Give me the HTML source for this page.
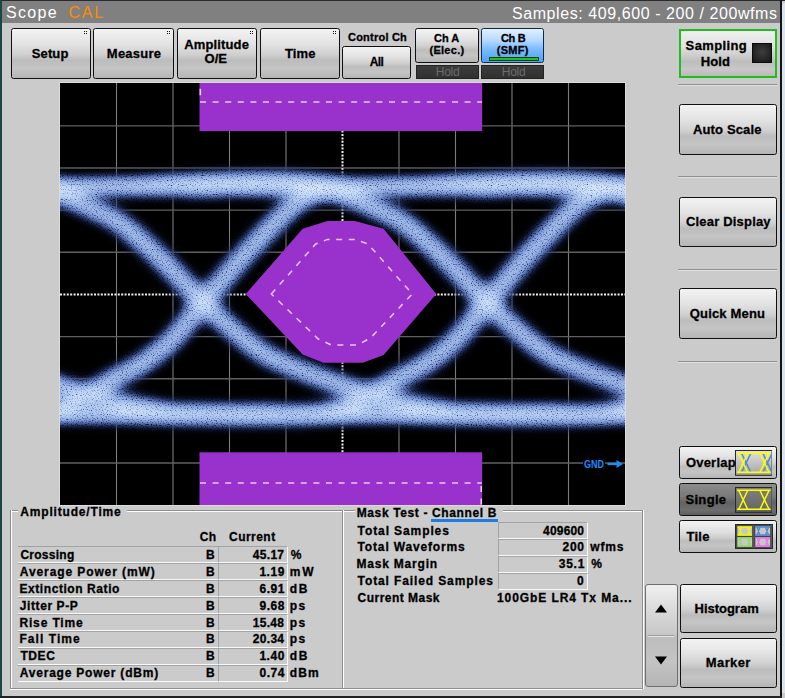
<!DOCTYPE html><html><head><meta charset="utf-8"><style>
*{margin:0;padding:0;box-sizing:border-box}
html,body{width:785px;height:698px;overflow:hidden;background:#cbcbcb;font-family:"Liberation Sans",sans-serif;color:#000}
.a{position:absolute}
.t{position:absolute;white-space:nowrap;line-height:1}
.b{font-weight:bold;-webkit-text-stroke:0.3px currentColor}
.btn{position:absolute;border:1.5px solid #101010;border-radius:2.5px;background:linear-gradient(#f3f3f3 0%,#e3e3e3 30%,#d0d0d0 52%,#bcbcbc 64%,#c5c5c5 80%,#b5b5b5 100%)}
.cell{position:absolute;border-top:1px solid #a3a3a3;border-left:1px solid #a3a3a3;border-bottom:1px solid #fafafa;border-right:1px solid #fafafa}
</style></head><body><div class="a" style="left:0px;top:0px;width:785.00px;height:1.00px;background:#2a2a2a"></div>
<div class="a" style="left:0px;top:0px;width:1.50px;height:698.00px;background:#1b4646"></div>
<div class="a" style="left:1.5px;top:1px;width:778.50px;height:21.50px;background:#808080"></div>
<div class="a" style="left:780px;top:0px;width:2.40px;height:698.00px;background:#141414"></div>
<div class="a" style="left:782.4px;top:2.5px;width:2.60px;height:690.50px;background:#dae4ee;border-radius:3px 0 0 0"></div>
<div class="a" style="left:0px;top:695.6px;width:782.40px;height:2.40px;background:#222"></div>
<div class="btn" style="left:11px;top:28.2px;width:79.50px;height:50.40px;"></div>
<svg class="a" style="left:84px;top:31px" width="4" height="4"><path d="M0,0h1v1h-1zM2,0h1v1h-1zM0,2h1v1h-1zM2,2h1v1h-1z" fill="#111"/></svg>
<div class="btn" style="left:93px;top:28.2px;width:80.80px;height:50.40px;"></div>
<svg class="a" style="left:167px;top:31px" width="4" height="4"><path d="M0,0h1v1h-1zM2,0h1v1h-1zM0,2h1v1h-1zM2,2h1v1h-1z" fill="#111"/></svg>
<div class="btn" style="left:176.5px;top:28.2px;width:80.30px;height:50.40px;"></div>
<svg class="a" style="left:250px;top:31px" width="4" height="4"><path d="M0,0h1v1h-1zM2,0h1v1h-1zM0,2h1v1h-1zM2,2h1v1h-1z" fill="#111"/></svg>
<div class="btn" style="left:259.8px;top:28.2px;width:79.80px;height:50.40px;"></div>
<svg class="a" style="left:333px;top:31px" width="4" height="4"><path d="M0,0h1v1h-1zM2,0h1v1h-1zM0,2h1v1h-1zM2,2h1v1h-1z" fill="#111"/></svg>
<div class="btn" style="left:342.1px;top:46.2px;width:69.20px;height:32.50px;"></div>
<div class="btn" style="left:415.4px;top:28.2px;width:63.30px;height:35.10px;"></div>
<div class="btn" style="left:481.3px;top:28.2px;width:62.80px;height:35.10px;background:linear-gradient(#e2f0ff 0%,#b4d8ff 35%,#7dbcff 60%,#4aa2f8 100%);border-color:#0c2a50"></div>
<div class="a" style="left:488.5px;top:57px;width:50.30px;height:3.50px;background:#20c020;border:1px solid #0b3d0b"></div>
<div class="a" style="left:415.5px;top:65.1px;width:63.20px;height:13.50px;background:linear-gradient(#3c3c3c,#303030);border:1px solid #232323"></div>
<div class="a" style="left:481.3px;top:65.1px;width:63.20px;height:13.50px;background:linear-gradient(#3c3c3c,#303030);border:1px solid #232323"></div>
<div class="a" style="left:679.3px;top:28.5px;width:97.50px;height:49.70px;border:2px solid #1fbd1f;background:linear-gradient(#f0f0f0 0%,#e0e0e0 35%,#cdcdcd 55%,#bdbdbd 68%,#c8c8c8 85%,#bababa 100%)"></div>
<div class="a" style="left:752px;top:42.7px;width:20.00px;height:20.20px;background:radial-gradient(circle at 50% 45%,#3e3e3e,#222 70%,#141414);border:1px solid #0a0a0a"></div>
<div class="a" style="left:678px;top:83.6px;width:99.00px;height:1.00px;background:#8e8e8e;box-shadow:0 1px 0 #e2e2e2"></div>
<div class="a" style="left:678px;top:176.4px;width:99.00px;height:1.00px;background:#8e8e8e;box-shadow:0 1px 0 #e2e2e2"></div>
<div class="a" style="left:678px;top:268.7px;width:99.00px;height:1.00px;background:#8e8e8e;box-shadow:0 1px 0 #e2e2e2"></div>
<div class="a" style="left:678px;top:360.5px;width:99.00px;height:1.00px;background:#8e8e8e;box-shadow:0 1px 0 #e2e2e2"></div>
<div class="btn" style="left:679.3px;top:103.8px;width:97.30px;height:50.90px;"></div>
<div class="btn" style="left:679.3px;top:196.8px;width:97.30px;height:49.80px;"></div>
<div class="btn" style="left:679.3px;top:288.2px;width:97.30px;height:50.40px;"></div>
<div class="btn" style="left:679.3px;top:445.8px;width:97.30px;height:33.60px;"></div>
<div class="btn" style="left:679.3px;top:482.6px;width:97.30px;height:33.70px;background:linear-gradient(#8c8c8c 0%,#7a7a7a 40%,#636363 60%,#6e6e6e 85%,#5c5c5c 100%)"></div>
<div class="btn" style="left:679.3px;top:519.6px;width:97.30px;height:33.80px;"></div>
<div class="btn" style="left:679.5px;top:583.5px;width:97.10px;height:49.10px;"></div>
<div class="btn" style="left:679.5px;top:638px;width:97.10px;height:49.70px;"></div>
<div class="a" style="left:644.5px;top:584.1px;width:33.00px;height:103.40px;border:1px solid #6e6e6e;border-radius:3px;background:linear-gradient(#f0f0f0 0%,#dadada 25%,#c8c8c8 48%,#bdbdbd 52%,#c4c4c4 75%,#b4b4b4 100%)"></div>
<div class="a" style="left:648px;top:635px;width:26.00px;height:2.00px;background:#e4e4e4;border-top:1px solid #a0a0a0"></div>
<svg class="a" style="left:654px;top:602px" width="14" height="12"><path d="M1,10.5 L7,2.5 L13,10.5 Z" fill="#000"/></svg>
<svg class="a" style="left:654px;top:655px" width="14" height="12"><path d="M1,1.5 L7,9.5 L13,1.5 Z" fill="#000"/></svg>
<svg class="a" style="left:734.8px;top:449.8px" width="37.6" height="25.8" viewBox="0 0 37.6 25.8"><defs><linearGradient id="g449" x1="0" y1="0" x2="0" y2="1"><stop offset="0" stop-color="#e2e2e2"/><stop offset="1" stop-color="#a4a4a4"/></linearGradient></defs><rect x="0.5" y="0.5" width="36.6" height="24.8" fill="url(#g449)" stroke="#2a2a2a" stroke-width="1"/><path d="M6.699999999999999,3.5 L15.7,22.3 M15.7,3.5 L6.699999999999999,22.3" stroke="#4a88d8" stroke-width="1.5" fill="none"/><path d="M28.0,3.5 L37.0,22.3 M37.0,3.5 L28.0,22.3" stroke="#4a88d8" stroke-width="1.5" fill="none"/><path d="M3.6999999999999993,3.5 L12.7,22.3 M12.7,3.5 L3.6999999999999993,22.3" stroke="#ffff00" stroke-width="1.5" fill="none"/><path d="M25.0,3.5 L34.0,22.3 M34.0,3.5 L25.0,22.3" stroke="#ffff00" stroke-width="1.5" fill="none"/><path d="M2,3.3 H35.6 M2,22.2 H35.6" stroke="#ffff00" stroke-width="1.6"/></svg>
<svg class="a" style="left:734.8px;top:486.9px" width="37.6" height="25.8" viewBox="0 0 37.6 25.8"><defs><linearGradient id="g486" x1="0" y1="0" x2="0" y2="1"><stop offset="0" stop-color="#808080"/><stop offset="1" stop-color="#646464"/></linearGradient></defs><rect x="0.5" y="0.5" width="36.6" height="24.8" fill="url(#g486)" stroke="#2a2a2a" stroke-width="1"/><path d="M3.6999999999999993,3.5 L12.7,22.3 M12.7,3.5 L3.6999999999999993,22.3" stroke="#ffff00" stroke-width="1.5" fill="none"/><path d="M25.0,3.5 L34.0,22.3 M34.0,3.5 L25.0,22.3" stroke="#ffff00" stroke-width="1.5" fill="none"/><path d="M2,3.3 H35.6 M2,22.2 H35.6" stroke="#ffff00" stroke-width="1.6"/></svg>
<svg class="a" style="left:735px;top:524.3px" width="38" height="25" viewBox="0 0 38 25"><rect x="0.5" y="0.5" width="37" height="24" fill="#555" stroke="#2a2a2a"/><rect x="2" y="2" width="15.5" height="10" fill="#c8c8c8" stroke="#333" stroke-width="0.6"/><path d="M2.5,3 H17 M2.5,11 H17 M4,3 L7,11 M7,3 L4,11 M12.5,3 L15.5,11 M15.5,3 L12.5,11" stroke="#f5f500" stroke-width="1.3" fill="none"/><rect x="20" y="2" width="15.5" height="10" fill="#c8c8c8" stroke="#333" stroke-width="0.6"/><path d="M20.5,3 H35 M20.5,11 H35 M22,3 L25,11 M25,3 L22,11 M30.5,3 L33.5,11 M33.5,3 L30.5,11" stroke="#4a88d8" stroke-width="1.3" fill="none"/><rect x="2" y="13" width="15.5" height="10" fill="#c8c8c8" stroke="#333" stroke-width="0.6"/><path d="M2.5,14 H17 M2.5,22 H17 M4,14 L7,22 M7,14 L4,22 M12.5,14 L15.5,22 M15.5,14 L12.5,22" stroke="#90e060" stroke-width="1.3" fill="none"/><rect x="20" y="13" width="15.5" height="10" fill="#c8c8c8" stroke="#333" stroke-width="0.6"/><path d="M20.5,14 H35 M20.5,22 H35 M22,14 L25,22 M25,14 L22,22 M30.5,14 L33.5,22 M33.5,14 L30.5,22" stroke="#f070f0" stroke-width="1.3" fill="none"/></svg>
<div class="a" style="left:10.3px;top:510.2px;width:7.70px;height:1.00px;background:#8e8e8e;box-shadow:0 1px 0 #fff"></div>
<div class="a" style="left:126.8px;top:510.2px;width:227.80px;height:1.00px;background:#8e8e8e;box-shadow:0 1px 0 #fff"></div>
<div class="a" style="left:10.3px;top:510.2px;width:1.00px;height:178.30px;background:#8e8e8e;box-shadow:1px 0 0 #fff"></div>
<div class="a" style="left:10.3px;top:688.3px;width:632.20px;height:1.00px;background:#8e8e8e;box-shadow:0 1px 0 #fff"></div>
<div class="a" style="left:502.8px;top:510.2px;width:139.20px;height:1.00px;background:#8e8e8e;box-shadow:0 1px 0 #fff"></div>
<div class="a" style="left:342.2px;top:510.2px;width:1.00px;height:178.30px;background:#8e8e8e;box-shadow:1px 0 0 #fff"></div>
<div class="a" style="left:641.5px;top:510.2px;width:1.00px;height:179.10px;background:#8e8e8e;box-shadow:1px 0 0 #fff"></div>
<div class="a" style="left:431.2px;top:519px;width:66.90px;height:2.50px;background:#1a7ee6"></div>
<div class="a" style="left:18px;top:546.0px;width:200.50px;height:17.00px;border-top:1px solid #a3a3a3;border-bottom:1px solid #fafafa"></div>
<div class="cell" style="left:218.3px;top:546.00px;width:69.5px;height:17px"></div>
<div class="a" style="left:18px;top:562.93px;width:200.50px;height:17.00px;border-top:1px solid #a3a3a3;border-bottom:1px solid #fafafa"></div>
<div class="cell" style="left:218.3px;top:562.93px;width:69.5px;height:17px"></div>
<div class="a" style="left:18px;top:579.86px;width:200.50px;height:17.00px;border-top:1px solid #a3a3a3;border-bottom:1px solid #fafafa"></div>
<div class="cell" style="left:218.3px;top:579.86px;width:69.5px;height:17px"></div>
<div class="a" style="left:18px;top:596.79px;width:200.50px;height:17.00px;border-top:1px solid #a3a3a3;border-bottom:1px solid #fafafa"></div>
<div class="cell" style="left:218.3px;top:596.79px;width:69.5px;height:17px"></div>
<div class="a" style="left:18px;top:613.72px;width:200.50px;height:17.00px;border-top:1px solid #a3a3a3;border-bottom:1px solid #fafafa"></div>
<div class="cell" style="left:218.3px;top:613.72px;width:69.5px;height:17px"></div>
<div class="a" style="left:18px;top:630.65px;width:200.50px;height:17.00px;border-top:1px solid #a3a3a3;border-bottom:1px solid #fafafa"></div>
<div class="cell" style="left:218.3px;top:630.65px;width:69.5px;height:17px"></div>
<div class="a" style="left:18px;top:647.58px;width:200.50px;height:17.00px;border-top:1px solid #a3a3a3;border-bottom:1px solid #fafafa"></div>
<div class="cell" style="left:218.3px;top:647.58px;width:69.5px;height:17px"></div>
<div class="a" style="left:18px;top:664.51px;width:200.50px;height:17.00px;border-top:1px solid #a3a3a3;border-bottom:1px solid #fafafa"></div>
<div class="cell" style="left:218.3px;top:664.51px;width:69.5px;height:17px"></div>
<div class="cell" style="left:498px;top:522.20px;width:90px;height:17px"></div>
<div class="cell" style="left:498px;top:539.10px;width:90px;height:17px"></div>
<div class="cell" style="left:498px;top:556.00px;width:90px;height:17px"></div>
<div class="cell" style="left:498px;top:572.90px;width:90px;height:17px"></div>
<div class="a" style="left:59px;top:82px;width:567px;height:424px;background:#dcdcdc"></div>
<svg class="a" style="left:60px;top:83px" width="565" height="422" viewBox="0 0 565 422">
<defs>
<filter id="eye" filterUnits="userSpaceOnUse" x="0" y="0" width="565" height="422" color-interpolation-filters="sRGB"><feGaussianBlur in="SourceAlpha" stdDeviation="7" result="b"/><feColorMatrix in="b" type="matrix" values="0 0 0 1 0 0 0 0 1 0 0 0 0 1 0 0 0 0 0 1" result="d"/><feTurbulence type="fractalNoise" baseFrequency="0.8" numOctaves="1" seed="7" result="n0"/><feColorMatrix in="n0" type="matrix" values="2.2 0 0 0 -0.1 2.2 0 0 0 -0.1 2.2 0 0 0 -0.1 0 0 0 0 1" result="n"/><feComposite in="d" in2="n" operator="arithmetic" k1="1" k2="0" k3="0" k4="0" result="dn"/><feColorMatrix in="dn" type="matrix" values="1 0 0 0 0 1 0 0 0 0 1 0 0 0 0 1 0 0 0 0"/><feComponentTransfer><feFuncR type="table" tableValues="0.02 0.13 0.31 0.48 0.62 0.73 0.83 0.90"/><feFuncG type="table" tableValues="0.03 0.20 0.41 0.59 0.72 0.82 0.89 0.94"/><feFuncB type="table" tableValues="0.10 0.42 0.67 0.83 0.90 0.95 0.97 0.99"/><feFuncA type="table" tableValues="0 0.55 0.88 1 1 1 1 1"/></feComponentTransfer></filter>
</defs>
<rect width="565" height="422" fill="#000"/>
<line x1="56.50" y1="0" x2="56.50" y2="422" stroke="#7c7c7c" stroke-width="1.1"/>
<line x1="113.00" y1="0" x2="113.00" y2="422" stroke="#7c7c7c" stroke-width="1.1"/>
<line x1="169.50" y1="0" x2="169.50" y2="422" stroke="#7c7c7c" stroke-width="1.1"/>
<line x1="226.00" y1="0" x2="226.00" y2="422" stroke="#7c7c7c" stroke-width="1.1"/>
<line x1="339.00" y1="0" x2="339.00" y2="422" stroke="#7c7c7c" stroke-width="1.1"/>
<line x1="395.50" y1="0" x2="395.50" y2="422" stroke="#7c7c7c" stroke-width="1.1"/>
<line x1="452.00" y1="0" x2="452.00" y2="422" stroke="#7c7c7c" stroke-width="1.1"/>
<line x1="508.50" y1="0" x2="508.50" y2="422" stroke="#7c7c7c" stroke-width="1.1"/>
<line x1="0" y1="42.89" x2="565" y2="42.89" stroke="#606060" stroke-width="1.4"/>
<line x1="0" y1="85.03" x2="565" y2="85.03" stroke="#606060" stroke-width="1.4"/>
<line x1="0" y1="127.17" x2="565" y2="127.17" stroke="#606060" stroke-width="1.4"/>
<line x1="0" y1="169.31" x2="565" y2="169.31" stroke="#606060" stroke-width="1.4"/>
<line x1="0" y1="253.59" x2="565" y2="253.59" stroke="#606060" stroke-width="1.4"/>
<line x1="0" y1="295.73" x2="565" y2="295.73" stroke="#606060" stroke-width="1.4"/>
<line x1="0" y1="337.87" x2="565" y2="337.87" stroke="#606060" stroke-width="1.4"/>
<line x1="0" y1="380.01" x2="565" y2="380.01" stroke="#606060" stroke-width="1.4"/>
<line x1="0" y1="211.45" x2="565" y2="211.45" stroke="#f2f2f2" stroke-width="2" stroke-dasharray="2 1.4"/>
<line x1="282.50" y1="0" x2="282.50" y2="422" stroke="#f2f2f2" stroke-width="2" stroke-dasharray="2 1.4"/>
<g filter="url(#eye)">
<g fill="none" stroke="#fff" stroke-linecap="butt">
<path d="M-541.0,103.0 C-499.3,103.0 -347.7,103.2 -291.0,103.0 C-234.3,102.8 -226.0,102.3 -201.0,102.0 C-176.0,101.7 -161.0,101.2 -141.0,101.0 C-121.0,100.8 -101.0,100.3 -81.0,100.5 C-61.0,100.7 -37.7,101.6 -21.0,102.0 C-4.3,102.4 -11.0,102.8 19.0,103.0 C49.0,103.2 135.7,103.0 159.0,103.0" stroke-width="10" stroke-opacity="1"/>
<path d="M-257.0,103.0 C-215.3,103.0 -63.7,103.2 -7.0,103.0 C49.7,102.8 58.0,102.3 83.0,102.0 C108.0,101.7 123.0,101.2 143.0,101.0 C163.0,100.8 183.0,100.3 203.0,100.5 C223.0,100.7 246.3,101.6 263.0,102.0 C279.7,102.4 273.0,102.8 303.0,103.0 C333.0,103.2 419.7,103.0 443.0,103.0" stroke-width="10" stroke-opacity="1"/>
<path d="M27.0,103.0 C68.7,103.0 220.3,103.2 277.0,103.0 C333.7,102.8 342.0,102.3 367.0,102.0 C392.0,101.7 407.0,101.2 427.0,101.0 C447.0,100.8 467.0,100.3 487.0,100.5 C507.0,100.7 530.3,101.6 547.0,102.0 C563.7,102.4 557.0,102.8 587.0,103.0 C617.0,103.2 703.7,103.0 727.0,103.0" stroke-width="10" stroke-opacity="1"/>
<path d="M311.0,103.0 C352.7,103.0 504.3,103.2 561.0,103.0 C617.7,102.8 626.0,102.3 651.0,102.0 C676.0,101.7 691.0,101.2 711.0,101.0 C731.0,100.8 751.0,100.3 771.0,100.5 C791.0,100.7 814.3,101.6 831.0,102.0 C847.7,102.4 841.0,102.8 871.0,103.0 C901.0,103.2 987.7,103.0 1011.0,103.0" stroke-width="10" stroke-opacity="1"/>
<path d="M-541.0,332.0 C-499.3,331.8 -357.7,331.0 -291.0,331.0 C-224.3,331.0 -189.5,331.8 -141.0,332.0 C-92.5,332.2 -50.0,332.0 0.0,332.0 C50.0,332.0 132.5,332.0 159.0,332.0" stroke-width="10" stroke-opacity="1"/>
<path d="M-257.0,332.0 C-215.3,331.8 -73.7,331.0 -7.0,331.0 C59.7,331.0 94.5,331.8 143.0,332.0 C191.5,332.2 234.0,332.0 284.0,332.0 C334.0,332.0 416.5,332.0 443.0,332.0" stroke-width="10" stroke-opacity="1"/>
<path d="M27.0,332.0 C68.7,331.8 210.3,331.0 277.0,331.0 C343.7,331.0 378.5,331.8 427.0,332.0 C475.5,332.2 518.0,332.0 568.0,332.0 C618.0,332.0 700.5,332.0 727.0,332.0" stroke-width="10" stroke-opacity="1"/>
<path d="M311.0,332.0 C352.7,331.8 494.3,331.0 561.0,331.0 C627.7,331.0 662.5,331.8 711.0,332.0 C759.5,332.2 802.0,332.0 852.0,332.0 C902.0,332.0 984.5,332.0 1011.0,332.0" stroke-width="10" stroke-opacity="1"/>
<path d="M-221.0,103.0 C-211.0,102.1 -181.0,98.9 -161.0,97.5 C-141.0,96.1 -121.0,94.8 -101.0,94.5 C-81.0,94.2 -59.3,94.1 -41.0,95.5 C-22.7,96.9 0.7,101.8 9.0,103.0" stroke-width="10" stroke-opacity="0.5"/>
<path d="M63.0,103.0 C73.0,102.1 103.0,98.9 123.0,97.5 C143.0,96.1 163.0,94.8 183.0,94.5 C203.0,94.2 224.7,94.1 243.0,95.5 C261.3,96.9 284.7,101.8 293.0,103.0" stroke-width="10" stroke-opacity="0.5"/>
<path d="M347.0,103.0 C357.0,102.1 387.0,98.9 407.0,97.5 C427.0,96.1 447.0,94.8 467.0,94.5 C487.0,94.2 508.7,94.1 527.0,95.5 C545.3,96.9 568.7,101.8 577.0,103.0" stroke-width="10" stroke-opacity="0.5"/>
<path d="M-231.0,332.0 C-221.0,332.7 -192.7,335.1 -171.0,336.0 C-149.3,336.9 -122.7,337.4 -101.0,337.5 C-79.3,337.6 -59.3,337.4 -41.0,336.5 C-22.7,335.6 0.7,332.8 9.0,332.0" stroke-width="10" stroke-opacity="0.35"/>
<path d="M53.0,332.0 C63.0,332.7 91.3,335.1 113.0,336.0 C134.7,336.9 161.3,337.4 183.0,337.5 C204.7,337.6 224.7,337.4 243.0,336.5 C261.3,335.6 284.7,332.8 293.0,332.0" stroke-width="10" stroke-opacity="0.35"/>
<path d="M337.0,332.0 C347.0,332.7 375.3,335.1 397.0,336.0 C418.7,336.9 445.3,337.4 467.0,337.5 C488.7,337.6 508.7,337.4 527.0,336.5 C545.3,335.6 568.7,332.8 577.0,332.0" stroke-width="10" stroke-opacity="0.35"/>
<path d="M621.0,332.0 C631.0,332.7 659.3,335.1 681.0,336.0 C702.7,336.9 729.3,337.4 751.0,337.5 C772.7,337.6 792.7,337.4 811.0,336.5 C829.3,335.6 852.7,332.8 861.0,332.0" stroke-width="10" stroke-opacity="0.35"/>
<path d="M-450.0,103.0 C-433.3,103.1 -372.5,103.0 -350.0,103.5 C-327.5,104.0 -325.0,104.4 -315.0,106.0 C-305.0,107.6 -298.3,110.0 -290.0,113.0 C-281.7,116.0 -274.0,119.8 -265.0,124.0 C-256.0,128.2 -245.3,132.0 -236.0,138.0 C-226.7,144.0 -218.5,151.5 -209.0,160.0 C-199.5,168.5 -188.8,179.1 -179.0,189.0 C-169.2,198.9 -159.8,209.8 -150.0,219.5 C-140.2,229.2 -129.7,238.8 -120.0,247.0 C-110.3,255.2 -100.7,263.3 -92.0,269.0 C-83.3,274.7 -76.7,277.2 -68.0,281.0 C-59.3,284.8 -49.8,288.3 -40.0,292.0 C-30.2,295.7 -20.5,299.2 -9.0,303.0 C2.5,306.8 16.3,311.7 29.0,315.0 C41.7,318.3 55.2,320.7 67.0,323.0 C78.8,325.3 86.2,327.5 100.0,329.0 C113.8,330.5 131.7,331.5 150.0,332.0 C168.3,332.5 200.0,332.0 210.0,332.0" stroke-width="10" stroke-opacity="0.2"/>
<path d="M-166.0,103.0 C-149.3,103.1 -88.5,103.0 -66.0,103.5 C-43.5,104.0 -41.0,104.4 -31.0,106.0 C-21.0,107.6 -14.3,110.0 -6.0,113.0 C2.3,116.0 10.0,119.8 19.0,124.0 C28.0,128.2 38.7,132.0 48.0,138.0 C57.3,144.0 65.5,151.5 75.0,160.0 C84.5,168.5 95.2,179.1 105.0,189.0 C114.8,198.9 124.2,209.8 134.0,219.5 C143.8,229.2 154.3,238.8 164.0,247.0 C173.7,255.2 183.3,263.3 192.0,269.0 C200.7,274.7 207.3,277.2 216.0,281.0 C224.7,284.8 234.2,288.3 244.0,292.0 C253.8,295.7 263.5,299.2 275.0,303.0 C286.5,306.8 300.3,311.7 313.0,315.0 C325.7,318.3 339.2,320.7 351.0,323.0 C362.8,325.3 370.2,327.5 384.0,329.0 C397.8,330.5 415.7,331.5 434.0,332.0 C452.3,332.5 484.0,332.0 494.0,332.0" stroke-width="10" stroke-opacity="0.2"/>
<path d="M118.0,103.0 C134.7,103.1 195.5,103.0 218.0,103.5 C240.5,104.0 243.0,104.4 253.0,106.0 C263.0,107.6 269.7,110.0 278.0,113.0 C286.3,116.0 294.0,119.8 303.0,124.0 C312.0,128.2 322.7,132.0 332.0,138.0 C341.3,144.0 349.5,151.5 359.0,160.0 C368.5,168.5 379.2,179.1 389.0,189.0 C398.8,198.9 408.2,209.8 418.0,219.5 C427.8,229.2 438.3,238.8 448.0,247.0 C457.7,255.2 467.3,263.3 476.0,269.0 C484.7,274.7 491.3,277.2 500.0,281.0 C508.7,284.8 518.2,288.3 528.0,292.0 C537.8,295.7 547.5,299.2 559.0,303.0 C570.5,306.8 584.3,311.7 597.0,315.0 C609.7,318.3 623.2,320.7 635.0,323.0 C646.8,325.3 654.2,327.5 668.0,329.0 C681.8,330.5 699.7,331.5 718.0,332.0 C736.3,332.5 768.0,332.0 778.0,332.0" stroke-width="10" stroke-opacity="0.2"/>
<path d="M402.0,103.0 C418.7,103.1 479.5,103.0 502.0,103.5 C524.5,104.0 527.0,104.4 537.0,106.0 C547.0,107.6 553.7,110.0 562.0,113.0 C570.3,116.0 578.0,119.8 587.0,124.0 C596.0,128.2 606.7,132.0 616.0,138.0 C625.3,144.0 633.5,151.5 643.0,160.0 C652.5,168.5 663.2,179.1 673.0,189.0 C682.8,198.9 692.2,209.8 702.0,219.5 C711.8,229.2 722.3,238.8 732.0,247.0 C741.7,255.2 751.3,263.3 760.0,269.0 C768.7,274.7 775.3,277.2 784.0,281.0 C792.7,284.8 802.2,288.3 812.0,292.0 C821.8,295.7 831.5,299.2 843.0,303.0 C854.5,306.8 868.3,311.7 881.0,315.0 C893.7,318.3 907.2,320.7 919.0,323.0 C930.8,325.3 938.2,327.5 952.0,329.0 C965.8,330.5 983.7,331.5 1002.0,332.0 C1020.3,332.5 1052.0,332.0 1062.0,332.0" stroke-width="10" stroke-opacity="0.2"/>
<path d="M-450.0,332.0 C-431.7,331.9 -365.0,332.3 -340.0,331.5 C-315.0,330.7 -312.5,330.4 -300.0,327.0 C-287.5,323.6 -275.6,316.5 -265.0,311.0 C-254.4,305.5 -245.2,298.8 -236.5,294.0 C-227.8,289.2 -222.4,288.3 -213.0,282.0 C-203.6,275.7 -190.5,266.4 -180.0,256.0 C-169.5,245.6 -162.5,234.2 -150.0,219.5 C-137.5,204.8 -120.0,184.1 -105.0,168.0 C-90.0,151.9 -72.5,133.0 -60.0,123.0 C-47.5,113.0 -41.7,111.3 -30.0,108.0 C-18.3,104.7 -20.0,103.8 10.0,103.0 C40.0,102.2 126.7,103.0 150.0,103.0" stroke-width="10" stroke-opacity="0.2"/>
<path d="M-166.0,332.0 C-147.7,331.9 -81.0,332.3 -56.0,331.5 C-31.0,330.7 -28.5,330.4 -16.0,327.0 C-3.5,323.6 8.4,316.5 19.0,311.0 C29.6,305.5 38.8,298.8 47.5,294.0 C56.2,289.2 61.6,288.3 71.0,282.0 C80.4,275.7 93.5,266.4 104.0,256.0 C114.5,245.6 121.5,234.2 134.0,219.5 C146.5,204.8 164.0,184.1 179.0,168.0 C194.0,151.9 211.5,133.0 224.0,123.0 C236.5,113.0 242.3,111.3 254.0,108.0 C265.7,104.7 264.0,103.8 294.0,103.0 C324.0,102.2 410.7,103.0 434.0,103.0" stroke-width="10" stroke-opacity="0.2"/>
<path d="M118.0,332.0 C136.3,331.9 203.0,332.3 228.0,331.5 C253.0,330.7 255.5,330.4 268.0,327.0 C280.5,323.6 292.4,316.5 303.0,311.0 C313.6,305.5 322.8,298.8 331.5,294.0 C340.2,289.2 345.6,288.3 355.0,282.0 C364.4,275.7 377.5,266.4 388.0,256.0 C398.5,245.6 405.5,234.2 418.0,219.5 C430.5,204.8 448.0,184.1 463.0,168.0 C478.0,151.9 495.5,133.0 508.0,123.0 C520.5,113.0 526.3,111.3 538.0,108.0 C549.7,104.7 548.0,103.8 578.0,103.0 C608.0,102.2 694.7,103.0 718.0,103.0" stroke-width="10" stroke-opacity="0.2"/>
<path d="M402.0,332.0 C420.3,331.9 487.0,332.3 512.0,331.5 C537.0,330.7 539.5,330.4 552.0,327.0 C564.5,323.6 576.4,316.5 587.0,311.0 C597.6,305.5 606.8,298.8 615.5,294.0 C624.2,289.2 629.6,288.3 639.0,282.0 C648.4,275.7 661.5,266.4 672.0,256.0 C682.5,245.6 689.5,234.2 702.0,219.5 C714.5,204.8 732.0,184.1 747.0,168.0 C762.0,151.9 779.5,133.0 792.0,123.0 C804.5,113.0 810.3,111.3 822.0,108.0 C833.7,104.7 832.0,103.8 862.0,103.0 C892.0,102.2 978.7,103.0 1002.0,103.0" stroke-width="10" stroke-opacity="0.2"/>
<path d="M-445.5,103.0 C-428.8,103.1 -368.0,103.0 -345.5,103.5 C-323.0,104.0 -320.5,104.4 -310.5,106.0 C-300.5,107.6 -293.8,110.0 -285.5,113.0 C-277.2,116.0 -269.5,119.8 -260.5,124.0 C-251.5,128.2 -240.8,132.0 -231.5,138.0 C-222.2,144.0 -214.0,151.5 -204.5,160.0 C-195.0,168.5 -184.3,179.1 -174.5,189.0 C-164.7,198.9 -155.3,209.8 -145.5,219.5 C-135.7,229.2 -125.2,238.8 -115.5,247.0 C-105.8,255.2 -96.2,263.3 -87.5,269.0 C-78.8,274.7 -72.2,277.2 -63.5,281.0 C-54.8,284.8 -45.3,288.3 -35.5,292.0 C-25.7,295.7 -16.0,299.2 -4.5,303.0 C7.0,306.8 20.8,311.7 33.5,315.0 C46.2,318.3 59.7,320.7 71.5,323.0 C83.3,325.3 90.7,327.5 104.5,329.0 C118.3,330.5 136.2,331.5 154.5,332.0 C172.8,332.5 204.5,332.0 214.5,332.0" stroke-width="10" stroke-opacity="0.3"/>
<path d="M-161.5,103.0 C-144.8,103.1 -84.0,103.0 -61.5,103.5 C-39.0,104.0 -36.5,104.4 -26.5,106.0 C-16.5,107.6 -9.8,110.0 -1.5,113.0 C6.8,116.0 14.5,119.8 23.5,124.0 C32.5,128.2 43.2,132.0 52.5,138.0 C61.8,144.0 70.0,151.5 79.5,160.0 C89.0,168.5 99.7,179.1 109.5,189.0 C119.3,198.9 128.7,209.8 138.5,219.5 C148.3,229.2 158.8,238.8 168.5,247.0 C178.2,255.2 187.8,263.3 196.5,269.0 C205.2,274.7 211.8,277.2 220.5,281.0 C229.2,284.8 238.7,288.3 248.5,292.0 C258.3,295.7 268.0,299.2 279.5,303.0 C291.0,306.8 304.8,311.7 317.5,315.0 C330.2,318.3 343.7,320.7 355.5,323.0 C367.3,325.3 374.7,327.5 388.5,329.0 C402.3,330.5 420.2,331.5 438.5,332.0 C456.8,332.5 488.5,332.0 498.5,332.0" stroke-width="10" stroke-opacity="0.3"/>
<path d="M122.5,103.0 C139.2,103.1 200.0,103.0 222.5,103.5 C245.0,104.0 247.5,104.4 257.5,106.0 C267.5,107.6 274.2,110.0 282.5,113.0 C290.8,116.0 298.5,119.8 307.5,124.0 C316.5,128.2 327.2,132.0 336.5,138.0 C345.8,144.0 354.0,151.5 363.5,160.0 C373.0,168.5 383.7,179.1 393.5,189.0 C403.3,198.9 412.7,209.8 422.5,219.5 C432.3,229.2 442.8,238.8 452.5,247.0 C462.2,255.2 471.8,263.3 480.5,269.0 C489.2,274.7 495.8,277.2 504.5,281.0 C513.2,284.8 522.7,288.3 532.5,292.0 C542.3,295.7 552.0,299.2 563.5,303.0 C575.0,306.8 588.8,311.7 601.5,315.0 C614.2,318.3 627.7,320.7 639.5,323.0 C651.3,325.3 658.7,327.5 672.5,329.0 C686.3,330.5 704.2,331.5 722.5,332.0 C740.8,332.5 772.5,332.0 782.5,332.0" stroke-width="10" stroke-opacity="0.3"/>
<path d="M406.5,103.0 C423.2,103.1 484.0,103.0 506.5,103.5 C529.0,104.0 531.5,104.4 541.5,106.0 C551.5,107.6 558.2,110.0 566.5,113.0 C574.8,116.0 582.5,119.8 591.5,124.0 C600.5,128.2 611.2,132.0 620.5,138.0 C629.8,144.0 638.0,151.5 647.5,160.0 C657.0,168.5 667.7,179.1 677.5,189.0 C687.3,198.9 696.7,209.8 706.5,219.5 C716.3,229.2 726.8,238.8 736.5,247.0 C746.2,255.2 755.8,263.3 764.5,269.0 C773.2,274.7 779.8,277.2 788.5,281.0 C797.2,284.8 806.7,288.3 816.5,292.0 C826.3,295.7 836.0,299.2 847.5,303.0 C859.0,306.8 872.8,311.7 885.5,315.0 C898.2,318.3 911.7,320.7 923.5,323.0 C935.3,325.3 942.7,327.5 956.5,329.0 C970.3,330.5 988.2,331.5 1006.5,332.0 C1024.8,332.5 1056.5,332.0 1066.5,332.0" stroke-width="10" stroke-opacity="0.3"/>
<path d="M-445.5,332.0 C-427.2,331.9 -360.5,332.3 -335.5,331.5 C-310.5,330.7 -308.0,330.4 -295.5,327.0 C-283.0,323.6 -271.1,316.5 -260.5,311.0 C-249.9,305.5 -240.7,298.8 -232.0,294.0 C-223.3,289.2 -217.9,288.3 -208.5,282.0 C-199.1,275.7 -186.0,266.4 -175.5,256.0 C-165.0,245.6 -158.0,234.2 -145.5,219.5 C-133.0,204.8 -115.5,184.1 -100.5,168.0 C-85.5,151.9 -68.0,133.0 -55.5,123.0 C-43.0,113.0 -37.2,111.3 -25.5,108.0 C-13.8,104.7 -15.5,103.8 14.5,103.0 C44.5,102.2 131.2,103.0 154.5,103.0" stroke-width="10" stroke-opacity="0.3"/>
<path d="M-161.5,332.0 C-143.2,331.9 -76.5,332.3 -51.5,331.5 C-26.5,330.7 -24.0,330.4 -11.5,327.0 C1.0,323.6 12.9,316.5 23.5,311.0 C34.1,305.5 43.3,298.8 52.0,294.0 C60.7,289.2 66.1,288.3 75.5,282.0 C84.9,275.7 98.0,266.4 108.5,256.0 C119.0,245.6 126.0,234.2 138.5,219.5 C151.0,204.8 168.5,184.1 183.5,168.0 C198.5,151.9 216.0,133.0 228.5,123.0 C241.0,113.0 246.8,111.3 258.5,108.0 C270.2,104.7 268.5,103.8 298.5,103.0 C328.5,102.2 415.2,103.0 438.5,103.0" stroke-width="10" stroke-opacity="0.3"/>
<path d="M122.5,332.0 C140.8,331.9 207.5,332.3 232.5,331.5 C257.5,330.7 260.0,330.4 272.5,327.0 C285.0,323.6 296.9,316.5 307.5,311.0 C318.1,305.5 327.3,298.8 336.0,294.0 C344.7,289.2 350.1,288.3 359.5,282.0 C368.9,275.7 382.0,266.4 392.5,256.0 C403.0,245.6 410.0,234.2 422.5,219.5 C435.0,204.8 452.5,184.1 467.5,168.0 C482.5,151.9 500.0,133.0 512.5,123.0 C525.0,113.0 530.8,111.3 542.5,108.0 C554.2,104.7 552.5,103.8 582.5,103.0 C612.5,102.2 699.2,103.0 722.5,103.0" stroke-width="10" stroke-opacity="0.3"/>
<path d="M406.5,332.0 C424.8,331.9 491.5,332.3 516.5,331.5 C541.5,330.7 544.0,330.4 556.5,327.0 C569.0,323.6 580.9,316.5 591.5,311.0 C602.1,305.5 611.3,298.8 620.0,294.0 C628.7,289.2 634.1,288.3 643.5,282.0 C652.9,275.7 666.0,266.4 676.5,256.0 C687.0,245.6 694.0,234.2 706.5,219.5 C719.0,204.8 736.5,184.1 751.5,168.0 C766.5,151.9 784.0,133.0 796.5,123.0 C809.0,113.0 814.8,111.3 826.5,108.0 C838.2,104.7 836.5,103.8 866.5,103.0 C896.5,102.2 983.2,103.0 1006.5,103.0" stroke-width="10" stroke-opacity="0.3"/>
<path d="M-441.0,103.0 C-424.3,103.1 -363.5,103.0 -341.0,103.5 C-318.5,104.0 -316.0,104.4 -306.0,106.0 C-296.0,107.6 -289.3,110.0 -281.0,113.0 C-272.7,116.0 -265.0,119.8 -256.0,124.0 C-247.0,128.2 -236.3,132.0 -227.0,138.0 C-217.7,144.0 -209.5,151.5 -200.0,160.0 C-190.5,168.5 -179.8,179.1 -170.0,189.0 C-160.2,198.9 -150.8,209.8 -141.0,219.5 C-131.2,229.2 -120.7,238.8 -111.0,247.0 C-101.3,255.2 -91.7,263.3 -83.0,269.0 C-74.3,274.7 -67.7,277.2 -59.0,281.0 C-50.3,284.8 -40.8,288.3 -31.0,292.0 C-21.2,295.7 -11.5,299.2 0.0,303.0 C11.5,306.8 25.3,311.7 38.0,315.0 C50.7,318.3 64.2,320.7 76.0,323.0 C87.8,325.3 95.2,327.5 109.0,329.0 C122.8,330.5 140.7,331.5 159.0,332.0 C177.3,332.5 209.0,332.0 219.0,332.0" stroke-width="10" stroke-opacity="0.4"/>
<path d="M-157.0,103.0 C-140.3,103.1 -79.5,103.0 -57.0,103.5 C-34.5,104.0 -32.0,104.4 -22.0,106.0 C-12.0,107.6 -5.3,110.0 3.0,113.0 C11.3,116.0 19.0,119.8 28.0,124.0 C37.0,128.2 47.7,132.0 57.0,138.0 C66.3,144.0 74.5,151.5 84.0,160.0 C93.5,168.5 104.2,179.1 114.0,189.0 C123.8,198.9 133.2,209.8 143.0,219.5 C152.8,229.2 163.3,238.8 173.0,247.0 C182.7,255.2 192.3,263.3 201.0,269.0 C209.7,274.7 216.3,277.2 225.0,281.0 C233.7,284.8 243.2,288.3 253.0,292.0 C262.8,295.7 272.5,299.2 284.0,303.0 C295.5,306.8 309.3,311.7 322.0,315.0 C334.7,318.3 348.2,320.7 360.0,323.0 C371.8,325.3 379.2,327.5 393.0,329.0 C406.8,330.5 424.7,331.5 443.0,332.0 C461.3,332.5 493.0,332.0 503.0,332.0" stroke-width="10" stroke-opacity="0.4"/>
<path d="M127.0,103.0 C143.7,103.1 204.5,103.0 227.0,103.5 C249.5,104.0 252.0,104.4 262.0,106.0 C272.0,107.6 278.7,110.0 287.0,113.0 C295.3,116.0 303.0,119.8 312.0,124.0 C321.0,128.2 331.7,132.0 341.0,138.0 C350.3,144.0 358.5,151.5 368.0,160.0 C377.5,168.5 388.2,179.1 398.0,189.0 C407.8,198.9 417.2,209.8 427.0,219.5 C436.8,229.2 447.3,238.8 457.0,247.0 C466.7,255.2 476.3,263.3 485.0,269.0 C493.7,274.7 500.3,277.2 509.0,281.0 C517.7,284.8 527.2,288.3 537.0,292.0 C546.8,295.7 556.5,299.2 568.0,303.0 C579.5,306.8 593.3,311.7 606.0,315.0 C618.7,318.3 632.2,320.7 644.0,323.0 C655.8,325.3 663.2,327.5 677.0,329.0 C690.8,330.5 708.7,331.5 727.0,332.0 C745.3,332.5 777.0,332.0 787.0,332.0" stroke-width="10" stroke-opacity="0.4"/>
<path d="M411.0,103.0 C427.7,103.1 488.5,103.0 511.0,103.5 C533.5,104.0 536.0,104.4 546.0,106.0 C556.0,107.6 562.7,110.0 571.0,113.0 C579.3,116.0 587.0,119.8 596.0,124.0 C605.0,128.2 615.7,132.0 625.0,138.0 C634.3,144.0 642.5,151.5 652.0,160.0 C661.5,168.5 672.2,179.1 682.0,189.0 C691.8,198.9 701.2,209.8 711.0,219.5 C720.8,229.2 731.3,238.8 741.0,247.0 C750.7,255.2 760.3,263.3 769.0,269.0 C777.7,274.7 784.3,277.2 793.0,281.0 C801.7,284.8 811.2,288.3 821.0,292.0 C830.8,295.7 840.5,299.2 852.0,303.0 C863.5,306.8 877.3,311.7 890.0,315.0 C902.7,318.3 916.2,320.7 928.0,323.0 C939.8,325.3 947.2,327.5 961.0,329.0 C974.8,330.5 992.7,331.5 1011.0,332.0 C1029.3,332.5 1061.0,332.0 1071.0,332.0" stroke-width="10" stroke-opacity="0.4"/>
<path d="M-441.0,332.0 C-422.7,331.9 -356.0,332.3 -331.0,331.5 C-306.0,330.7 -303.5,330.4 -291.0,327.0 C-278.5,323.6 -266.6,316.5 -256.0,311.0 C-245.4,305.5 -236.2,298.8 -227.5,294.0 C-218.8,289.2 -213.4,288.3 -204.0,282.0 C-194.6,275.7 -181.5,266.4 -171.0,256.0 C-160.5,245.6 -153.5,234.2 -141.0,219.5 C-128.5,204.8 -111.0,184.1 -96.0,168.0 C-81.0,151.9 -63.5,133.0 -51.0,123.0 C-38.5,113.0 -32.7,111.3 -21.0,108.0 C-9.3,104.7 -11.0,103.8 19.0,103.0 C49.0,102.2 135.7,103.0 159.0,103.0" stroke-width="10" stroke-opacity="0.4"/>
<path d="M-157.0,332.0 C-138.7,331.9 -72.0,332.3 -47.0,331.5 C-22.0,330.7 -19.5,330.4 -7.0,327.0 C5.5,323.6 17.4,316.5 28.0,311.0 C38.6,305.5 47.8,298.8 56.5,294.0 C65.2,289.2 70.6,288.3 80.0,282.0 C89.4,275.7 102.5,266.4 113.0,256.0 C123.5,245.6 130.5,234.2 143.0,219.5 C155.5,204.8 173.0,184.1 188.0,168.0 C203.0,151.9 220.5,133.0 233.0,123.0 C245.5,113.0 251.3,111.3 263.0,108.0 C274.7,104.7 273.0,103.8 303.0,103.0 C333.0,102.2 419.7,103.0 443.0,103.0" stroke-width="10" stroke-opacity="0.4"/>
<path d="M127.0,332.0 C145.3,331.9 212.0,332.3 237.0,331.5 C262.0,330.7 264.5,330.4 277.0,327.0 C289.5,323.6 301.4,316.5 312.0,311.0 C322.6,305.5 331.8,298.8 340.5,294.0 C349.2,289.2 354.6,288.3 364.0,282.0 C373.4,275.7 386.5,266.4 397.0,256.0 C407.5,245.6 414.5,234.2 427.0,219.5 C439.5,204.8 457.0,184.1 472.0,168.0 C487.0,151.9 504.5,133.0 517.0,123.0 C529.5,113.0 535.3,111.3 547.0,108.0 C558.7,104.7 557.0,103.8 587.0,103.0 C617.0,102.2 703.7,103.0 727.0,103.0" stroke-width="10" stroke-opacity="0.4"/>
<path d="M411.0,332.0 C429.3,331.9 496.0,332.3 521.0,331.5 C546.0,330.7 548.5,330.4 561.0,327.0 C573.5,323.6 585.4,316.5 596.0,311.0 C606.6,305.5 615.8,298.8 624.5,294.0 C633.2,289.2 638.6,288.3 648.0,282.0 C657.4,275.7 670.5,266.4 681.0,256.0 C691.5,245.6 698.5,234.2 711.0,219.5 C723.5,204.8 741.0,184.1 756.0,168.0 C771.0,151.9 788.5,133.0 801.0,123.0 C813.5,113.0 819.3,111.3 831.0,108.0 C842.7,104.7 841.0,103.8 871.0,103.0 C901.0,102.2 987.7,103.0 1011.0,103.0" stroke-width="10" stroke-opacity="0.4"/>
<path d="M-436.5,103.0 C-419.8,103.1 -359.0,103.0 -336.5,103.5 C-314.0,104.0 -311.5,104.4 -301.5,106.0 C-291.5,107.6 -284.8,110.0 -276.5,113.0 C-268.2,116.0 -260.5,119.8 -251.5,124.0 C-242.5,128.2 -231.8,132.0 -222.5,138.0 C-213.2,144.0 -205.0,151.5 -195.5,160.0 C-186.0,168.5 -175.3,179.1 -165.5,189.0 C-155.7,198.9 -146.3,209.8 -136.5,219.5 C-126.7,229.2 -116.2,238.8 -106.5,247.0 C-96.8,255.2 -87.2,263.3 -78.5,269.0 C-69.8,274.7 -63.2,277.2 -54.5,281.0 C-45.8,284.8 -36.3,288.3 -26.5,292.0 C-16.7,295.7 -7.0,299.2 4.5,303.0 C16.0,306.8 29.8,311.7 42.5,315.0 C55.2,318.3 68.7,320.7 80.5,323.0 C92.3,325.3 99.7,327.5 113.5,329.0 C127.3,330.5 145.2,331.5 163.5,332.0 C181.8,332.5 213.5,332.0 223.5,332.0" stroke-width="10" stroke-opacity="0.3"/>
<path d="M-152.5,103.0 C-135.8,103.1 -75.0,103.0 -52.5,103.5 C-30.0,104.0 -27.5,104.4 -17.5,106.0 C-7.5,107.6 -0.8,110.0 7.5,113.0 C15.8,116.0 23.5,119.8 32.5,124.0 C41.5,128.2 52.2,132.0 61.5,138.0 C70.8,144.0 79.0,151.5 88.5,160.0 C98.0,168.5 108.7,179.1 118.5,189.0 C128.3,198.9 137.7,209.8 147.5,219.5 C157.3,229.2 167.8,238.8 177.5,247.0 C187.2,255.2 196.8,263.3 205.5,269.0 C214.2,274.7 220.8,277.2 229.5,281.0 C238.2,284.8 247.7,288.3 257.5,292.0 C267.3,295.7 277.0,299.2 288.5,303.0 C300.0,306.8 313.8,311.7 326.5,315.0 C339.2,318.3 352.7,320.7 364.5,323.0 C376.3,325.3 383.7,327.5 397.5,329.0 C411.3,330.5 429.2,331.5 447.5,332.0 C465.8,332.5 497.5,332.0 507.5,332.0" stroke-width="10" stroke-opacity="0.3"/>
<path d="M131.5,103.0 C148.2,103.1 209.0,103.0 231.5,103.5 C254.0,104.0 256.5,104.4 266.5,106.0 C276.5,107.6 283.2,110.0 291.5,113.0 C299.8,116.0 307.5,119.8 316.5,124.0 C325.5,128.2 336.2,132.0 345.5,138.0 C354.8,144.0 363.0,151.5 372.5,160.0 C382.0,168.5 392.7,179.1 402.5,189.0 C412.3,198.9 421.7,209.8 431.5,219.5 C441.3,229.2 451.8,238.8 461.5,247.0 C471.2,255.2 480.8,263.3 489.5,269.0 C498.2,274.7 504.8,277.2 513.5,281.0 C522.2,284.8 531.7,288.3 541.5,292.0 C551.3,295.7 561.0,299.2 572.5,303.0 C584.0,306.8 597.8,311.7 610.5,315.0 C623.2,318.3 636.7,320.7 648.5,323.0 C660.3,325.3 667.7,327.5 681.5,329.0 C695.3,330.5 713.2,331.5 731.5,332.0 C749.8,332.5 781.5,332.0 791.5,332.0" stroke-width="10" stroke-opacity="0.3"/>
<path d="M415.5,103.0 C432.2,103.1 493.0,103.0 515.5,103.5 C538.0,104.0 540.5,104.4 550.5,106.0 C560.5,107.6 567.2,110.0 575.5,113.0 C583.8,116.0 591.5,119.8 600.5,124.0 C609.5,128.2 620.2,132.0 629.5,138.0 C638.8,144.0 647.0,151.5 656.5,160.0 C666.0,168.5 676.7,179.1 686.5,189.0 C696.3,198.9 705.7,209.8 715.5,219.5 C725.3,229.2 735.8,238.8 745.5,247.0 C755.2,255.2 764.8,263.3 773.5,269.0 C782.2,274.7 788.8,277.2 797.5,281.0 C806.2,284.8 815.7,288.3 825.5,292.0 C835.3,295.7 845.0,299.2 856.5,303.0 C868.0,306.8 881.8,311.7 894.5,315.0 C907.2,318.3 920.7,320.7 932.5,323.0 C944.3,325.3 951.7,327.5 965.5,329.0 C979.3,330.5 997.2,331.5 1015.5,332.0 C1033.8,332.5 1065.5,332.0 1075.5,332.0" stroke-width="10" stroke-opacity="0.3"/>
<path d="M-436.5,332.0 C-418.2,331.9 -351.5,332.3 -326.5,331.5 C-301.5,330.7 -299.0,330.4 -286.5,327.0 C-274.0,323.6 -262.1,316.5 -251.5,311.0 C-240.9,305.5 -231.7,298.8 -223.0,294.0 C-214.3,289.2 -208.9,288.3 -199.5,282.0 C-190.1,275.7 -177.0,266.4 -166.5,256.0 C-156.0,245.6 -149.0,234.2 -136.5,219.5 C-124.0,204.8 -106.5,184.1 -91.5,168.0 C-76.5,151.9 -59.0,133.0 -46.5,123.0 C-34.0,113.0 -28.2,111.3 -16.5,108.0 C-4.8,104.7 -6.5,103.8 23.5,103.0 C53.5,102.2 140.2,103.0 163.5,103.0" stroke-width="10" stroke-opacity="0.3"/>
<path d="M-152.5,332.0 C-134.2,331.9 -67.5,332.3 -42.5,331.5 C-17.5,330.7 -15.0,330.4 -2.5,327.0 C10.0,323.6 21.9,316.5 32.5,311.0 C43.1,305.5 52.3,298.8 61.0,294.0 C69.7,289.2 75.1,288.3 84.5,282.0 C93.9,275.7 107.0,266.4 117.5,256.0 C128.0,245.6 135.0,234.2 147.5,219.5 C160.0,204.8 177.5,184.1 192.5,168.0 C207.5,151.9 225.0,133.0 237.5,123.0 C250.0,113.0 255.8,111.3 267.5,108.0 C279.2,104.7 277.5,103.8 307.5,103.0 C337.5,102.2 424.2,103.0 447.5,103.0" stroke-width="10" stroke-opacity="0.3"/>
<path d="M131.5,332.0 C149.8,331.9 216.5,332.3 241.5,331.5 C266.5,330.7 269.0,330.4 281.5,327.0 C294.0,323.6 305.9,316.5 316.5,311.0 C327.1,305.5 336.3,298.8 345.0,294.0 C353.7,289.2 359.1,288.3 368.5,282.0 C377.9,275.7 391.0,266.4 401.5,256.0 C412.0,245.6 419.0,234.2 431.5,219.5 C444.0,204.8 461.5,184.1 476.5,168.0 C491.5,151.9 509.0,133.0 521.5,123.0 C534.0,113.0 539.8,111.3 551.5,108.0 C563.2,104.7 561.5,103.8 591.5,103.0 C621.5,102.2 708.2,103.0 731.5,103.0" stroke-width="10" stroke-opacity="0.3"/>
<path d="M415.5,332.0 C433.8,331.9 500.5,332.3 525.5,331.5 C550.5,330.7 553.0,330.4 565.5,327.0 C578.0,323.6 589.9,316.5 600.5,311.0 C611.1,305.5 620.3,298.8 629.0,294.0 C637.7,289.2 643.1,288.3 652.5,282.0 C661.9,275.7 675.0,266.4 685.5,256.0 C696.0,245.6 703.0,234.2 715.5,219.5 C728.0,204.8 745.5,184.1 760.5,168.0 C775.5,151.9 793.0,133.0 805.5,123.0 C818.0,113.0 823.8,111.3 835.5,108.0 C847.2,104.7 845.5,103.8 875.5,103.0 C905.5,102.2 992.2,103.0 1015.5,103.0" stroke-width="10" stroke-opacity="0.3"/>
<path d="M-432.0,103.0 C-415.3,103.1 -354.5,103.0 -332.0,103.5 C-309.5,104.0 -307.0,104.4 -297.0,106.0 C-287.0,107.6 -280.3,110.0 -272.0,113.0 C-263.7,116.0 -256.0,119.8 -247.0,124.0 C-238.0,128.2 -227.3,132.0 -218.0,138.0 C-208.7,144.0 -200.5,151.5 -191.0,160.0 C-181.5,168.5 -170.8,179.1 -161.0,189.0 C-151.2,198.9 -141.8,209.8 -132.0,219.5 C-122.2,229.2 -111.7,238.8 -102.0,247.0 C-92.3,255.2 -82.7,263.3 -74.0,269.0 C-65.3,274.7 -58.7,277.2 -50.0,281.0 C-41.3,284.8 -31.8,288.3 -22.0,292.0 C-12.2,295.7 -2.5,299.2 9.0,303.0 C20.5,306.8 34.3,311.7 47.0,315.0 C59.7,318.3 73.2,320.7 85.0,323.0 C96.8,325.3 104.2,327.5 118.0,329.0 C131.8,330.5 149.7,331.5 168.0,332.0 C186.3,332.5 218.0,332.0 228.0,332.0" stroke-width="10" stroke-opacity="0.2"/>
<path d="M-148.0,103.0 C-131.3,103.1 -70.5,103.0 -48.0,103.5 C-25.5,104.0 -23.0,104.4 -13.0,106.0 C-3.0,107.6 3.7,110.0 12.0,113.0 C20.3,116.0 28.0,119.8 37.0,124.0 C46.0,128.2 56.7,132.0 66.0,138.0 C75.3,144.0 83.5,151.5 93.0,160.0 C102.5,168.5 113.2,179.1 123.0,189.0 C132.8,198.9 142.2,209.8 152.0,219.5 C161.8,229.2 172.3,238.8 182.0,247.0 C191.7,255.2 201.3,263.3 210.0,269.0 C218.7,274.7 225.3,277.2 234.0,281.0 C242.7,284.8 252.2,288.3 262.0,292.0 C271.8,295.7 281.5,299.2 293.0,303.0 C304.5,306.8 318.3,311.7 331.0,315.0 C343.7,318.3 357.2,320.7 369.0,323.0 C380.8,325.3 388.2,327.5 402.0,329.0 C415.8,330.5 433.7,331.5 452.0,332.0 C470.3,332.5 502.0,332.0 512.0,332.0" stroke-width="10" stroke-opacity="0.2"/>
<path d="M136.0,103.0 C152.7,103.1 213.5,103.0 236.0,103.5 C258.5,104.0 261.0,104.4 271.0,106.0 C281.0,107.6 287.7,110.0 296.0,113.0 C304.3,116.0 312.0,119.8 321.0,124.0 C330.0,128.2 340.7,132.0 350.0,138.0 C359.3,144.0 367.5,151.5 377.0,160.0 C386.5,168.5 397.2,179.1 407.0,189.0 C416.8,198.9 426.2,209.8 436.0,219.5 C445.8,229.2 456.3,238.8 466.0,247.0 C475.7,255.2 485.3,263.3 494.0,269.0 C502.7,274.7 509.3,277.2 518.0,281.0 C526.7,284.8 536.2,288.3 546.0,292.0 C555.8,295.7 565.5,299.2 577.0,303.0 C588.5,306.8 602.3,311.7 615.0,315.0 C627.7,318.3 641.2,320.7 653.0,323.0 C664.8,325.3 672.2,327.5 686.0,329.0 C699.8,330.5 717.7,331.5 736.0,332.0 C754.3,332.5 786.0,332.0 796.0,332.0" stroke-width="10" stroke-opacity="0.2"/>
<path d="M420.0,103.0 C436.7,103.1 497.5,103.0 520.0,103.5 C542.5,104.0 545.0,104.4 555.0,106.0 C565.0,107.6 571.7,110.0 580.0,113.0 C588.3,116.0 596.0,119.8 605.0,124.0 C614.0,128.2 624.7,132.0 634.0,138.0 C643.3,144.0 651.5,151.5 661.0,160.0 C670.5,168.5 681.2,179.1 691.0,189.0 C700.8,198.9 710.2,209.8 720.0,219.5 C729.8,229.2 740.3,238.8 750.0,247.0 C759.7,255.2 769.3,263.3 778.0,269.0 C786.7,274.7 793.3,277.2 802.0,281.0 C810.7,284.8 820.2,288.3 830.0,292.0 C839.8,295.7 849.5,299.2 861.0,303.0 C872.5,306.8 886.3,311.7 899.0,315.0 C911.7,318.3 925.2,320.7 937.0,323.0 C948.8,325.3 956.2,327.5 970.0,329.0 C983.8,330.5 1001.7,331.5 1020.0,332.0 C1038.3,332.5 1070.0,332.0 1080.0,332.0" stroke-width="10" stroke-opacity="0.2"/>
<path d="M-432.0,332.0 C-413.7,331.9 -347.0,332.3 -322.0,331.5 C-297.0,330.7 -294.5,330.4 -282.0,327.0 C-269.5,323.6 -257.6,316.5 -247.0,311.0 C-236.4,305.5 -227.2,298.8 -218.5,294.0 C-209.8,289.2 -204.4,288.3 -195.0,282.0 C-185.6,275.7 -172.5,266.4 -162.0,256.0 C-151.5,245.6 -144.5,234.2 -132.0,219.5 C-119.5,204.8 -102.0,184.1 -87.0,168.0 C-72.0,151.9 -54.5,133.0 -42.0,123.0 C-29.5,113.0 -23.7,111.3 -12.0,108.0 C-0.3,104.7 -2.0,103.8 28.0,103.0 C58.0,102.2 144.7,103.0 168.0,103.0" stroke-width="10" stroke-opacity="0.2"/>
<path d="M-148.0,332.0 C-129.7,331.9 -63.0,332.3 -38.0,331.5 C-13.0,330.7 -10.5,330.4 2.0,327.0 C14.5,323.6 26.4,316.5 37.0,311.0 C47.6,305.5 56.8,298.8 65.5,294.0 C74.2,289.2 79.6,288.3 89.0,282.0 C98.4,275.7 111.5,266.4 122.0,256.0 C132.5,245.6 139.5,234.2 152.0,219.5 C164.5,204.8 182.0,184.1 197.0,168.0 C212.0,151.9 229.5,133.0 242.0,123.0 C254.5,113.0 260.3,111.3 272.0,108.0 C283.7,104.7 282.0,103.8 312.0,103.0 C342.0,102.2 428.7,103.0 452.0,103.0" stroke-width="10" stroke-opacity="0.2"/>
<path d="M136.0,332.0 C154.3,331.9 221.0,332.3 246.0,331.5 C271.0,330.7 273.5,330.4 286.0,327.0 C298.5,323.6 310.4,316.5 321.0,311.0 C331.6,305.5 340.8,298.8 349.5,294.0 C358.2,289.2 363.6,288.3 373.0,282.0 C382.4,275.7 395.5,266.4 406.0,256.0 C416.5,245.6 423.5,234.2 436.0,219.5 C448.5,204.8 466.0,184.1 481.0,168.0 C496.0,151.9 513.5,133.0 526.0,123.0 C538.5,113.0 544.3,111.3 556.0,108.0 C567.7,104.7 566.0,103.8 596.0,103.0 C626.0,102.2 712.7,103.0 736.0,103.0" stroke-width="10" stroke-opacity="0.2"/>
<path d="M420.0,332.0 C438.3,331.9 505.0,332.3 530.0,331.5 C555.0,330.7 557.5,330.4 570.0,327.0 C582.5,323.6 594.4,316.5 605.0,311.0 C615.6,305.5 624.8,298.8 633.5,294.0 C642.2,289.2 647.6,288.3 657.0,282.0 C666.4,275.7 679.5,266.4 690.0,256.0 C700.5,245.6 707.5,234.2 720.0,219.5 C732.5,204.8 750.0,184.1 765.0,168.0 C780.0,151.9 797.5,133.0 810.0,123.0 C822.5,113.0 828.3,111.3 840.0,108.0 C851.7,104.7 850.0,103.8 880.0,103.0 C910.0,102.2 996.7,103.0 1020.0,103.0" stroke-width="10" stroke-opacity="0.2"/>
<path d="M-441.0,103.0 C-424.3,103.0 -363.5,103.0 -341.0,103.0 C-318.5,103.0 -316.0,102.3 -306.0,103.0 C-296.0,103.7 -289.3,104.5 -281.0,107.0 C-272.7,109.5 -265.0,113.8 -256.0,118.0 C-247.0,122.2 -236.3,126.0 -227.0,132.0 C-217.7,138.0 -209.5,145.5 -200.0,154.0 C-190.5,162.5 -179.8,173.1 -170.0,183.0 C-160.2,192.9 -150.8,203.8 -141.0,213.5 C-131.2,223.2 -120.7,232.8 -111.0,241.0 C-101.3,249.2 -91.7,257.3 -83.0,263.0 C-74.3,268.7 -67.7,271.2 -59.0,275.0 C-50.3,278.8 -40.8,282.3 -31.0,286.0 C-21.2,289.7 -11.5,293.2 0.0,297.0 C11.5,300.8 25.3,305.7 38.0,309.0 C50.7,312.3 64.2,314.7 76.0,317.0 C87.8,319.3 95.2,321.5 109.0,323.0 C122.8,324.5 140.7,325.5 159.0,326.0 C177.3,326.5 209.0,326.0 219.0,326.0" stroke-width="10" stroke-opacity="0.22"/>
<path d="M-157.0,103.0 C-140.3,103.0 -79.5,103.0 -57.0,103.0 C-34.5,103.0 -32.0,102.3 -22.0,103.0 C-12.0,103.7 -5.3,104.5 3.0,107.0 C11.3,109.5 19.0,113.8 28.0,118.0 C37.0,122.2 47.7,126.0 57.0,132.0 C66.3,138.0 74.5,145.5 84.0,154.0 C93.5,162.5 104.2,173.1 114.0,183.0 C123.8,192.9 133.2,203.8 143.0,213.5 C152.8,223.2 163.3,232.8 173.0,241.0 C182.7,249.2 192.3,257.3 201.0,263.0 C209.7,268.7 216.3,271.2 225.0,275.0 C233.7,278.8 243.2,282.3 253.0,286.0 C262.8,289.7 272.5,293.2 284.0,297.0 C295.5,300.8 309.3,305.7 322.0,309.0 C334.7,312.3 348.2,314.7 360.0,317.0 C371.8,319.3 379.2,321.5 393.0,323.0 C406.8,324.5 424.7,325.5 443.0,326.0 C461.3,326.5 493.0,326.0 503.0,326.0" stroke-width="10" stroke-opacity="0.22"/>
<path d="M127.0,103.0 C143.7,103.0 204.5,103.0 227.0,103.0 C249.5,103.0 252.0,102.3 262.0,103.0 C272.0,103.7 278.7,104.5 287.0,107.0 C295.3,109.5 303.0,113.8 312.0,118.0 C321.0,122.2 331.7,126.0 341.0,132.0 C350.3,138.0 358.5,145.5 368.0,154.0 C377.5,162.5 388.2,173.1 398.0,183.0 C407.8,192.9 417.2,203.8 427.0,213.5 C436.8,223.2 447.3,232.8 457.0,241.0 C466.7,249.2 476.3,257.3 485.0,263.0 C493.7,268.7 500.3,271.2 509.0,275.0 C517.7,278.8 527.2,282.3 537.0,286.0 C546.8,289.7 556.5,293.2 568.0,297.0 C579.5,300.8 593.3,305.7 606.0,309.0 C618.7,312.3 632.2,314.7 644.0,317.0 C655.8,319.3 663.2,321.5 677.0,323.0 C690.8,324.5 708.7,325.5 727.0,326.0 C745.3,326.5 777.0,326.0 787.0,326.0" stroke-width="10" stroke-opacity="0.22"/>
<path d="M411.0,103.0 C427.7,103.0 488.5,103.0 511.0,103.0 C533.5,103.0 536.0,102.3 546.0,103.0 C556.0,103.7 562.7,104.5 571.0,107.0 C579.3,109.5 587.0,113.8 596.0,118.0 C605.0,122.2 615.7,126.0 625.0,132.0 C634.3,138.0 642.5,145.5 652.0,154.0 C661.5,162.5 672.2,173.1 682.0,183.0 C691.8,192.9 701.2,203.8 711.0,213.5 C720.8,223.2 731.3,232.8 741.0,241.0 C750.7,249.2 760.3,257.3 769.0,263.0 C777.7,268.7 784.3,271.2 793.0,275.0 C801.7,278.8 811.2,282.3 821.0,286.0 C830.8,289.7 840.5,293.2 852.0,297.0 C863.5,300.8 877.3,305.7 890.0,309.0 C902.7,312.3 916.2,314.7 928.0,317.0 C939.8,319.3 947.2,321.5 961.0,323.0 C974.8,324.5 992.7,325.5 1011.0,326.0 C1029.3,326.5 1061.0,326.0 1071.0,326.0" stroke-width="10" stroke-opacity="0.22"/>
<path d="M-441.0,326.0 C-422.7,325.9 -356.0,326.3 -331.0,325.5 C-306.0,324.7 -303.5,324.4 -291.0,321.0 C-278.5,317.6 -266.6,310.5 -256.0,305.0 C-245.4,299.5 -236.2,292.8 -227.5,288.0 C-218.8,283.2 -213.4,282.3 -204.0,276.0 C-194.6,269.7 -181.5,260.4 -171.0,250.0 C-160.5,239.6 -153.5,228.2 -141.0,213.5 C-128.5,198.8 -111.0,178.1 -96.0,162.0 C-81.0,145.9 -63.5,126.8 -51.0,117.0 C-38.5,107.2 -32.7,105.3 -21.0,103.0 C-9.3,100.7 -11.0,103.0 19.0,103.0 C49.0,103.0 135.7,103.0 159.0,103.0" stroke-width="10" stroke-opacity="0.22"/>
<path d="M-157.0,326.0 C-138.7,325.9 -72.0,326.3 -47.0,325.5 C-22.0,324.7 -19.5,324.4 -7.0,321.0 C5.5,317.6 17.4,310.5 28.0,305.0 C38.6,299.5 47.8,292.8 56.5,288.0 C65.2,283.2 70.6,282.3 80.0,276.0 C89.4,269.7 102.5,260.4 113.0,250.0 C123.5,239.6 130.5,228.2 143.0,213.5 C155.5,198.8 173.0,178.1 188.0,162.0 C203.0,145.9 220.5,126.8 233.0,117.0 C245.5,107.2 251.3,105.3 263.0,103.0 C274.7,100.7 273.0,103.0 303.0,103.0 C333.0,103.0 419.7,103.0 443.0,103.0" stroke-width="10" stroke-opacity="0.22"/>
<path d="M127.0,326.0 C145.3,325.9 212.0,326.3 237.0,325.5 C262.0,324.7 264.5,324.4 277.0,321.0 C289.5,317.6 301.4,310.5 312.0,305.0 C322.6,299.5 331.8,292.8 340.5,288.0 C349.2,283.2 354.6,282.3 364.0,276.0 C373.4,269.7 386.5,260.4 397.0,250.0 C407.5,239.6 414.5,228.2 427.0,213.5 C439.5,198.8 457.0,178.1 472.0,162.0 C487.0,145.9 504.5,126.8 517.0,117.0 C529.5,107.2 535.3,105.3 547.0,103.0 C558.7,100.7 557.0,103.0 587.0,103.0 C617.0,103.0 703.7,103.0 727.0,103.0" stroke-width="10" stroke-opacity="0.22"/>
<path d="M411.0,326.0 C429.3,325.9 496.0,326.3 521.0,325.5 C546.0,324.7 548.5,324.4 561.0,321.0 C573.5,317.6 585.4,310.5 596.0,305.0 C606.6,299.5 615.8,292.8 624.5,288.0 C633.2,283.2 638.6,282.3 648.0,276.0 C657.4,269.7 670.5,260.4 681.0,250.0 C691.5,239.6 698.5,228.2 711.0,213.5 C723.5,198.8 741.0,178.1 756.0,162.0 C771.0,145.9 788.5,126.8 801.0,117.0 C813.5,107.2 819.3,105.3 831.0,103.0 C842.7,100.7 841.0,103.0 871.0,103.0 C901.0,103.0 987.7,103.0 1011.0,103.0" stroke-width="10" stroke-opacity="0.22"/>
<path d="M-441.0,109.0 C-424.3,109.1 -363.5,109.0 -341.0,109.5 C-318.5,110.0 -316.0,110.4 -306.0,112.0 C-296.0,113.6 -289.3,116.0 -281.0,119.0 C-272.7,122.0 -265.0,125.8 -256.0,130.0 C-247.0,134.2 -236.3,138.0 -227.0,144.0 C-217.7,150.0 -209.5,157.5 -200.0,166.0 C-190.5,174.5 -179.8,185.1 -170.0,195.0 C-160.2,204.9 -150.8,215.8 -141.0,225.5 C-131.2,235.2 -120.7,244.8 -111.0,253.0 C-101.3,261.2 -91.7,269.3 -83.0,275.0 C-74.3,280.7 -67.7,283.2 -59.0,287.0 C-50.3,290.8 -40.8,294.3 -31.0,298.0 C-21.2,301.7 -11.5,305.2 0.0,309.0 C11.5,312.8 25.3,317.7 38.0,321.0 C50.7,324.3 64.2,327.2 76.0,329.0 C87.8,330.8 95.2,331.5 109.0,332.0 C122.8,332.5 140.7,332.0 159.0,332.0 C177.3,332.0 209.0,332.0 219.0,332.0" stroke-width="10" stroke-opacity="0.22"/>
<path d="M-157.0,109.0 C-140.3,109.1 -79.5,109.0 -57.0,109.5 C-34.5,110.0 -32.0,110.4 -22.0,112.0 C-12.0,113.6 -5.3,116.0 3.0,119.0 C11.3,122.0 19.0,125.8 28.0,130.0 C37.0,134.2 47.7,138.0 57.0,144.0 C66.3,150.0 74.5,157.5 84.0,166.0 C93.5,174.5 104.2,185.1 114.0,195.0 C123.8,204.9 133.2,215.8 143.0,225.5 C152.8,235.2 163.3,244.8 173.0,253.0 C182.7,261.2 192.3,269.3 201.0,275.0 C209.7,280.7 216.3,283.2 225.0,287.0 C233.7,290.8 243.2,294.3 253.0,298.0 C262.8,301.7 272.5,305.2 284.0,309.0 C295.5,312.8 309.3,317.7 322.0,321.0 C334.7,324.3 348.2,327.2 360.0,329.0 C371.8,330.8 379.2,331.5 393.0,332.0 C406.8,332.5 424.7,332.0 443.0,332.0 C461.3,332.0 493.0,332.0 503.0,332.0" stroke-width="10" stroke-opacity="0.22"/>
<path d="M127.0,109.0 C143.7,109.1 204.5,109.0 227.0,109.5 C249.5,110.0 252.0,110.4 262.0,112.0 C272.0,113.6 278.7,116.0 287.0,119.0 C295.3,122.0 303.0,125.8 312.0,130.0 C321.0,134.2 331.7,138.0 341.0,144.0 C350.3,150.0 358.5,157.5 368.0,166.0 C377.5,174.5 388.2,185.1 398.0,195.0 C407.8,204.9 417.2,215.8 427.0,225.5 C436.8,235.2 447.3,244.8 457.0,253.0 C466.7,261.2 476.3,269.3 485.0,275.0 C493.7,280.7 500.3,283.2 509.0,287.0 C517.7,290.8 527.2,294.3 537.0,298.0 C546.8,301.7 556.5,305.2 568.0,309.0 C579.5,312.8 593.3,317.7 606.0,321.0 C618.7,324.3 632.2,327.2 644.0,329.0 C655.8,330.8 663.2,331.5 677.0,332.0 C690.8,332.5 708.7,332.0 727.0,332.0 C745.3,332.0 777.0,332.0 787.0,332.0" stroke-width="10" stroke-opacity="0.22"/>
<path d="M411.0,109.0 C427.7,109.1 488.5,109.0 511.0,109.5 C533.5,110.0 536.0,110.4 546.0,112.0 C556.0,113.6 562.7,116.0 571.0,119.0 C579.3,122.0 587.0,125.8 596.0,130.0 C605.0,134.2 615.7,138.0 625.0,144.0 C634.3,150.0 642.5,157.5 652.0,166.0 C661.5,174.5 672.2,185.1 682.0,195.0 C691.8,204.9 701.2,215.8 711.0,225.5 C720.8,235.2 731.3,244.8 741.0,253.0 C750.7,261.2 760.3,269.3 769.0,275.0 C777.7,280.7 784.3,283.2 793.0,287.0 C801.7,290.8 811.2,294.3 821.0,298.0 C830.8,301.7 840.5,305.2 852.0,309.0 C863.5,312.8 877.3,317.7 890.0,321.0 C902.7,324.3 916.2,327.2 928.0,329.0 C939.8,330.8 947.2,331.5 961.0,332.0 C974.8,332.5 992.7,332.0 1011.0,332.0 C1029.3,332.0 1061.0,332.0 1071.0,332.0" stroke-width="10" stroke-opacity="0.22"/>
<path d="M-441.0,332.0 C-422.7,332.0 -356.0,332.0 -331.0,332.0 C-306.0,332.0 -303.5,334.5 -291.0,332.0 C-278.5,329.5 -266.6,322.3 -256.0,317.0 C-245.4,311.7 -236.2,304.8 -227.5,300.0 C-218.8,295.2 -213.4,294.3 -204.0,288.0 C-194.6,281.7 -181.5,272.4 -171.0,262.0 C-160.5,251.6 -153.5,240.2 -141.0,225.5 C-128.5,210.8 -111.0,190.1 -96.0,174.0 C-81.0,157.9 -63.5,139.0 -51.0,129.0 C-38.5,119.0 -32.7,117.3 -21.0,114.0 C-9.3,110.7 -11.0,109.8 19.0,109.0 C49.0,108.2 135.7,109.0 159.0,109.0" stroke-width="10" stroke-opacity="0.22"/>
<path d="M-157.0,332.0 C-138.7,332.0 -72.0,332.0 -47.0,332.0 C-22.0,332.0 -19.5,334.5 -7.0,332.0 C5.5,329.5 17.4,322.3 28.0,317.0 C38.6,311.7 47.8,304.8 56.5,300.0 C65.2,295.2 70.6,294.3 80.0,288.0 C89.4,281.7 102.5,272.4 113.0,262.0 C123.5,251.6 130.5,240.2 143.0,225.5 C155.5,210.8 173.0,190.1 188.0,174.0 C203.0,157.9 220.5,139.0 233.0,129.0 C245.5,119.0 251.3,117.3 263.0,114.0 C274.7,110.7 273.0,109.8 303.0,109.0 C333.0,108.2 419.7,109.0 443.0,109.0" stroke-width="10" stroke-opacity="0.22"/>
<path d="M127.0,332.0 C145.3,332.0 212.0,332.0 237.0,332.0 C262.0,332.0 264.5,334.5 277.0,332.0 C289.5,329.5 301.4,322.3 312.0,317.0 C322.6,311.7 331.8,304.8 340.5,300.0 C349.2,295.2 354.6,294.3 364.0,288.0 C373.4,281.7 386.5,272.4 397.0,262.0 C407.5,251.6 414.5,240.2 427.0,225.5 C439.5,210.8 457.0,190.1 472.0,174.0 C487.0,157.9 504.5,139.0 517.0,129.0 C529.5,119.0 535.3,117.3 547.0,114.0 C558.7,110.7 557.0,109.8 587.0,109.0 C617.0,108.2 703.7,109.0 727.0,109.0" stroke-width="10" stroke-opacity="0.22"/>
<path d="M411.0,332.0 C429.3,332.0 496.0,332.0 521.0,332.0 C546.0,332.0 548.5,334.5 561.0,332.0 C573.5,329.5 585.4,322.3 596.0,317.0 C606.6,311.7 615.8,304.8 624.5,300.0 C633.2,295.2 638.6,294.3 648.0,288.0 C657.4,281.7 670.5,272.4 681.0,262.0 C691.5,251.6 698.5,240.2 711.0,225.5 C723.5,210.8 741.0,190.1 756.0,174.0 C771.0,157.9 788.5,139.0 801.0,129.0 C813.5,119.0 819.3,117.3 831.0,114.0 C842.7,110.7 841.0,109.8 871.0,109.0 C901.0,108.2 987.7,109.0 1011.0,109.0" stroke-width="10" stroke-opacity="0.22"/>
</g></g>
<rect x="139.5" y="0" width="282.7" height="48.1" fill="#9932cc"/>
<line x1="140" y1="19.1" x2="422" y2="19.1" stroke="#e8c8f0" stroke-width="1.5" stroke-dasharray="6 6.6"/>
<rect x="139.5" y="369.3" width="282.7" height="52.7" fill="#9932cc"/>
<line x1="140" y1="400.0" x2="422" y2="400.0" stroke="#e8c8f0" stroke-width="1.5" stroke-dasharray="6 6.6"/>
<polygon points="185.7,211.0 242.7,145.8 267.5,138.0 294.9,138.0 323.6,145.8 376.3,211.0 323.6,271.9 302.7,279.7 263.5,279.7 242.7,271.5" fill="#9932cc"/>
<polygon points="211.3,211.0 255.7,161.0 267.5,156.4 294.9,156.4 308.0,161.0 352.3,211.0 310.5,255.0 297.5,262.0 271.4,262.0 258.3,256.0" fill="none" stroke="#e8c8f0" stroke-width="1.5" stroke-dasharray="6 6.6"/>
<rect x="523" y="375" width="22" height="11" fill="#000"/>
<text x="524" y="384.7" font-family="Liberation Sans" font-weight="bold" font-size="10" fill="#1a8cff" textLength="20" lengthAdjust="spacingAndGlyphs">GND</text>
<path d="M547.5,381 H558" stroke="#1a8cff" stroke-width="2.2"/><path d="M556.5,377 L563,381 L556.5,385 Z" fill="#1a8cff"/>
<rect x="139.5" y="5.799999999999997" width="1.6" height="6.5" fill="#e8d0f0"/>
<path d="M421.2,403 V422" stroke="#e8d0f0" stroke-width="1.5" stroke-dasharray="6 6.6"/>
</svg>
<div class="t" style="left:5.90px;top:5.36px;font-size:16px;color:#fff;letter-spacing:1.325px">Scope</div>
<div class="t" style="left:68.60px;top:5.36px;font-size:16px;color:#ff8c00;letter-spacing:1.7px">CAL</div>
<div class="t" style="left:512.00px;top:5.66px;font-size:16px;color:#fff;letter-spacing:0.571px">Samples: 409,600 - 200 / 200wfms</div>
<div class="t b" style="left:31.70px;top:46.70px;font-size:13px;color:#000;letter-spacing:0.15px">Setup</div>
<div class="t b" style="left:106.80px;top:46.70px;font-size:13px;color:#000;letter-spacing:0.25px">Measure</div>
<div class="t b" style="left:184.20px;top:37.80px;font-size:13px;color:#000;letter-spacing:0.15px">Amplitude</div>
<div class="t b" style="left:204.60px;top:52.40px;font-size:13px;color:#000;letter-spacing:0.0px">O/E</div>
<div class="t b" style="left:284.90px;top:46.60px;font-size:13px;color:#000;letter-spacing:0.133px">Time</div>
<div class="t b" style="left:348.00px;top:31.69px;font-size:11px;color:#000;letter-spacing:0.222px">Control Ch</div>
<div class="t b" style="left:369.80px;top:56.44px;font-size:12px;color:#000;letter-spacing:-0.6px">All</div>
<div class="t b" style="left:434.10px;top:32.99px;font-size:11px;color:#000;letter-spacing:-0.033px">Ch A</div>
<div class="t b" style="left:429.50px;top:45.09px;font-size:11px;color:#000;letter-spacing:0.267px">(Elec.)</div>
<div class="t b" style="left:501.00px;top:32.99px;font-size:11px;color:#000;letter-spacing:-0.333px">Ch B</div>
<div class="t b" style="left:496.70px;top:45.09px;font-size:11px;color:#000;letter-spacing:0.325px">(SMF)</div>
<div class="t" style="left:435.80px;top:66.14px;font-size:12px;color:#6c6c6c;letter-spacing:-0.267px">Hold</div>
<div class="t" style="left:501.80px;top:66.14px;font-size:12px;color:#6c6c6c;letter-spacing:-0.267px">Hold</div>
<div class="t b" style="left:685.60px;top:39.00px;font-size:13px;color:#000;letter-spacing:0.371px">Sampling</div>
<div class="t b" style="left:700.70px;top:55.00px;font-size:13px;color:#000;letter-spacing:0.1px">Hold</div>
<div class="t b" style="left:693.00px;top:122.50px;font-size:13px;color:#000;letter-spacing:0.144px">Auto Scale</div>
<div class="t b" style="left:686.00px;top:214.60px;font-size:13px;color:#000;letter-spacing:0.183px">Clear Display</div>
<div class="t b" style="left:689.80px;top:306.70px;font-size:13px;color:#000;letter-spacing:0.167px">Quick Menu</div>
<div class="t b" style="left:685.90px;top:455.90px;font-size:13px;color:#000;letter-spacing:0.217px">Overlap</div>
<div class="t b" style="left:685.40px;top:492.70px;font-size:13px;color:#000;letter-spacing:0.34px">Single</div>
<div class="t b" style="left:686.40px;top:529.50px;font-size:13px;color:#000;letter-spacing:0.333px">Tile</div>
<div class="t b" style="left:694.50px;top:601.90px;font-size:13px;color:#000;letter-spacing:-0.013px">Histogram</div>
<div class="t b" style="left:705.80px;top:655.90px;font-size:13px;color:#000;letter-spacing:0.4px">Marker</div>
<div class="t b" style="left:20.30px;top:506.24px;font-size:12px;color:#000;letter-spacing:0.823px">Amplitude/Time</div>
<div class="t b" style="left:356.70px;top:506.74px;font-size:12px;color:#000;letter-spacing:0.63px">Mask Test - Channel B</div>
<div class="t b" style="left:199.80px;top:531.14px;font-size:12px;color:#000;letter-spacing:0.2px">Ch</div>
<div class="t b" style="left:229.00px;top:531.14px;font-size:12px;color:#000;letter-spacing:0.467px">Current</div>
<div class="t b" style="left:20.40px;top:548.84px;font-size:12px;color:#000;letter-spacing:0.271px">Crossing</div>
<div class="t b" style="left:19.80px;top:565.74px;font-size:12px;color:#000;letter-spacing:0.9px">Average Power (mW)</div>
<div class="t b" style="left:19.40px;top:582.64px;font-size:12px;color:#000;letter-spacing:0.58px">Extinction Ratio</div>
<div class="t b" style="left:19.80px;top:599.64px;font-size:12px;color:#000;letter-spacing:0.589px">Jitter P-P</div>
<div class="t b" style="left:19.40px;top:616.54px;font-size:12px;color:#000;letter-spacing:0.862px">Rise Time</div>
<div class="t b" style="left:19.40px;top:633.44px;font-size:12px;color:#000;letter-spacing:1.075px">Fall Time</div>
<div class="t b" style="left:20.40px;top:650.44px;font-size:12px;color:#000;letter-spacing:0.6px">TDEC</div>
<div class="t b" style="left:19.80px;top:667.34px;font-size:12px;color:#000;letter-spacing:0.783px">Average Power (dBm)</div>
<div class="t b" style="left:357.60px;top:524.64px;font-size:12px;color:#000;letter-spacing:0.9px">Total Samples</div>
<div class="t b" style="left:357.60px;top:541.44px;font-size:12px;color:#000;letter-spacing:0.836px">Total Waveforms</div>
<div class="t b" style="left:356.60px;top:558.24px;font-size:12px;color:#000;letter-spacing:0.78px">Mask Margin</div>
<div class="t b" style="left:357.60px;top:575.04px;font-size:12px;color:#000;letter-spacing:0.884px">Total Failed Samples</div>
<div class="t b" style="left:357.60px;top:591.84px;font-size:12px;color:#000;letter-spacing:0.473px">Current Mask</div>
<div class="t b" style="left:543.10px;top:524.64px;font-size:12px;color:#000;letter-spacing:0.18px">409600</div>
<div class="t b" style="left:562.60px;top:541.44px;font-size:12px;color:#000;letter-spacing:0.7px">200</div>
<div class="t b" style="left:590.30px;top:541.44px;font-size:12px;color:#000;letter-spacing:0.833px">wfms</div>
<div class="t b" style="left:558.70px;top:558.24px;font-size:12px;color:#000;letter-spacing:0.767px">35.1</div>
<div class="t b" style="left:591.30px;top:558.24px;font-size:12px;color:#000;letter-spacing:0.0px">%</div>
<div class="t b" style="left:577.00px;top:575.04px;font-size:12px;color:#000;letter-spacing:0.3px">0</div>
<div class="t b" style="left:497.00px;top:591.84px;font-size:12px;color:#000;letter-spacing:0.917px">100GbE LR4 Tx Ma...</div>
<div class="t b" style="left:206.00px;top:548.84px;font-size:12px;color:#000;letter-spacing:0.0px">B</div>
<div class="t b" style="left:252.80px;top:548.84px;font-size:12px;color:#000;letter-spacing:0.3px">45.17</div>
<div class="t b" style="left:290.80px;top:548.84px;font-size:12px;color:#000;letter-spacing:0.0px">%</div>
<div class="t b" style="left:206.00px;top:565.77px;font-size:12px;color:#000;letter-spacing:0.0px">B</div>
<div class="t b" style="left:259.40px;top:565.77px;font-size:12px;color:#000;letter-spacing:0.533px">1.19</div>
<div class="t b" style="left:289.80px;top:565.77px;font-size:12px;color:#000;letter-spacing:1.8px">mW</div>
<div class="t b" style="left:206.00px;top:582.70px;font-size:12px;color:#000;letter-spacing:0.0px">B</div>
<div class="t b" style="left:259.60px;top:582.70px;font-size:12px;color:#000;letter-spacing:0.467px">6.91</div>
<div class="t b" style="left:289.80px;top:582.70px;font-size:12px;color:#000;letter-spacing:1.5px">dB</div>
<div class="t b" style="left:206.00px;top:599.63px;font-size:12px;color:#000;letter-spacing:0.0px">B</div>
<div class="t b" style="left:259.60px;top:599.63px;font-size:12px;color:#000;letter-spacing:0.467px">9.68</div>
<div class="t b" style="left:289.80px;top:599.63px;font-size:12px;color:#000;letter-spacing:1.3px">ps</div>
<div class="t b" style="left:206.00px;top:616.56px;font-size:12px;color:#000;letter-spacing:0.0px">B</div>
<div class="t b" style="left:252.70px;top:616.56px;font-size:12px;color:#000;letter-spacing:0.325px">15.48</div>
<div class="t b" style="left:289.80px;top:616.56px;font-size:12px;color:#000;letter-spacing:1.3px">ps</div>
<div class="t b" style="left:206.00px;top:633.49px;font-size:12px;color:#000;letter-spacing:0.0px">B</div>
<div class="t b" style="left:252.80px;top:633.49px;font-size:12px;color:#000;letter-spacing:0.3px">20.34</div>
<div class="t b" style="left:289.80px;top:633.49px;font-size:12px;color:#000;letter-spacing:1.3px">ps</div>
<div class="t b" style="left:206.00px;top:650.42px;font-size:12px;color:#000;letter-spacing:0.0px">B</div>
<div class="t b" style="left:259.40px;top:650.42px;font-size:12px;color:#000;letter-spacing:0.533px">1.40</div>
<div class="t b" style="left:289.80px;top:650.42px;font-size:12px;color:#000;letter-spacing:1.5px">dB</div>
<div class="t b" style="left:206.00px;top:667.35px;font-size:12px;color:#000;letter-spacing:0.0px">B</div>
<div class="t b" style="left:259.60px;top:667.35px;font-size:12px;color:#000;letter-spacing:0.467px">0.74</div>
<div class="t b" style="left:289.80px;top:667.35px;font-size:12px;color:#000;letter-spacing:1.1px">dBm</div></body></html>
